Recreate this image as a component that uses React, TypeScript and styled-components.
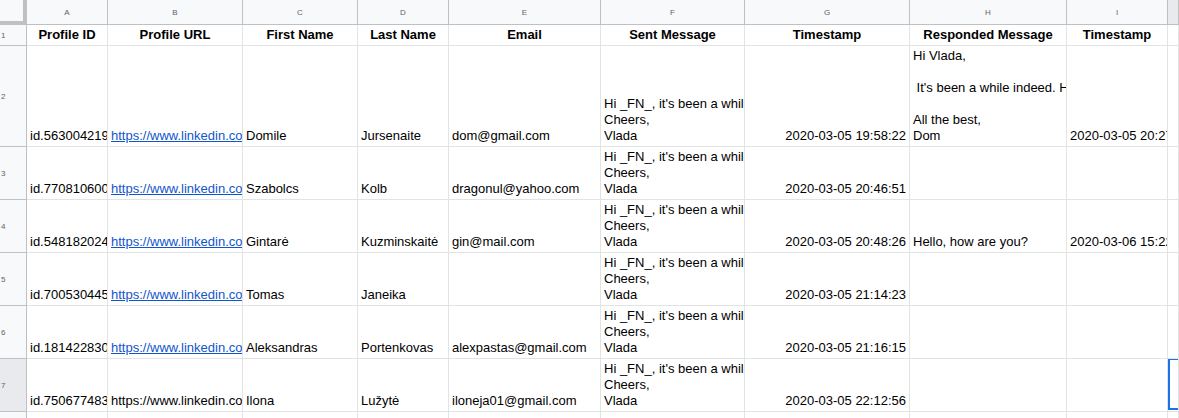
import React from 'react';
import styled, { createGlobalStyle } from 'styled-components';

const GlobalStyle = createGlobalStyle`
	html, body {
		margin: 0;
		padding: 0;
		background: #fff;
		overflow: hidden;
	}
`;

const grid = {
	line: '#e2e3e3',
	head: '#c0c0c0',
	headBg: '#f8f9fa',
	headSel: '#e8eaed',
	blue: '#1a73e8',
};

const Sheet = styled.div`
	display: grid;
	grid-template-columns: 27px 81px 135px 115px 91px 152px 144px 165px 157px 101px 1fr;
	grid-template-rows: 25px 21px 101px repeat(6, 53px);
	width: 1179px;
	height: 418px;
	overflow: hidden;
	font-family: 'Liberation Sans', Arial, sans-serif;
	color: #000;
`;

const Corner = styled.div`
	box-sizing: border-box;
	background: ${grid.headBg};
	border-right: 4px solid ${grid.head};
	border-bottom: 4px solid ${grid.head};
`;

const ColHead = styled.div<{ $selected?: boolean }>`
	box-sizing: border-box;
	display: flex;
	align-items: center;
	justify-content: center;
	background: ${(p) => (p.$selected ? grid.headSel : grid.headBg)};
	border-right: 1px solid ${grid.head};
	border-bottom: 1px solid ${grid.head};
	font-size: 8px;
	color: #5f6368;
`;

const RowHead = styled.div<{ $selected?: boolean }>`
	box-sizing: border-box;
	display: flex;
	align-items: center;
	padding-left: 1px;
	background: ${(p) => (p.$selected ? grid.headSel : grid.headBg)};
	border-right: 1px solid ${grid.head};
	border-bottom: 1px solid ${grid.head};
	font-size: 8px;
	color: #5f6368;
`;

const Cell = styled.div<{ $align?: 'left' | 'center' | 'right'; $bold?: boolean }>`
	position: relative;
	box-sizing: border-box;
	min-width: 0;
	display: flex;
	flex-direction: column;
	justify-content: flex-end;
	padding: 0 3px 2px;
	border-right: 1px solid ${grid.line};
	border-bottom: 1px solid ${grid.line};
	overflow: hidden;
	white-space: pre;
	font-size: 13px;
	line-height: 16px;
	font-weight: ${(p) => (p.$bold ? 700 : 400)};
	text-align: ${(p) => p.$align || 'left'};
`;

const Link = styled.span`
	color: #1155cc;
	text-decoration: underline;
`;

const Selection = styled.div`
	position: absolute;
	top: -1px;
	left: 0;
	right: -4px;
	bottom: 1px;
	border: 2px solid ${grid.blue};
`;

const letters = ['A', 'B', 'C', 'D', 'E', 'F', 'G', 'H', 'I', ''];
const titles = ['Profile ID', 'Profile URL', 'First Name', 'Last Name', 'Email', 'Sent Message', 'Timestamp', 'Responded Message', 'Timestamp', ''];

const sent = "Hi _FN_, it's been a while! How are things going on your end?\nCheers,\nVlada";

type Row = {
	id: string;
	linked: boolean;
	first: string;
	last: string;
	email: string;
	ts: string;
	reply: string;
	replyTs: string;
};

const rows: Row[] = [
	{
		id: 'id.5630042198',
		linked: true,
		first: 'Domile',
		last: 'Jursenaite',
		email: 'dom@gmail.com',
		ts: '2020-03-05 19:58:22',
		reply: "Hi Vlada,\n\n It's been a while indeed. How have you been?\n\nAll the best,\nDom",
		replyTs: '2020-03-05 20:27:41',
	},
	{ id: 'id.7708106004', linked: true, first: 'Szabolcs', last: 'Kolb', email: 'dragonul@yahoo.com', ts: '2020-03-05 20:46:51', reply: '', replyTs: '' },
	{ id: 'id.5481820243', linked: true, first: 'Gintarė', last: 'Kuzminskaitė', email: 'gin@mail.com', ts: '2020-03-05 20:48:26', reply: 'Hello, how are you?', replyTs: '2020-03-06 15:22:08' },
	{ id: 'id.7005304451', linked: true, first: 'Tomas', last: 'Janeika', email: '', ts: '2020-03-05 21:14:23', reply: '', replyTs: '' },
	{ id: 'id.1814228307', linked: true, first: 'Aleksandras', last: 'Portenkovas', email: 'alexpastas@gmail.com', ts: '2020-03-05 21:16:15', reply: '', replyTs: '' },
	{ id: 'id.7506774839', linked: false, first: 'Ilona', last: 'Lužytė', email: 'iloneja01@gmail.com', ts: '2020-03-05 22:12:56', reply: '', replyTs: '' },
];

const url = 'https://www.linkedin.com/in/profile';

function App() {
	const selectedRow = 5;

	return (
		<>
			<GlobalStyle />
			<Sheet>
				<Corner />
				{letters.map((l, i) => (
					<ColHead key={`c${i}`} $selected={i === 9}>{l}</ColHead>
				))}

				<RowHead>1</RowHead>
				{titles.map((t, i) => (
					<Cell key={`t${i}`} $align="center" $bold>{t}</Cell>
				))}

				{rows.map((r, i) => (
					<React.Fragment key={r.id}>
						<RowHead $selected={i === selectedRow}>{i + 2}</RowHead>
						<Cell>{r.id}</Cell>
						<Cell>{r.linked ? <Link>{url}</Link> : url}</Cell>
						<Cell>{r.first}</Cell>
						<Cell>{r.last}</Cell>
						<Cell>{r.email}</Cell>
						<Cell>{sent}</Cell>
						<Cell $align="right">{r.ts}</Cell>
						<Cell>{r.reply}</Cell>
						<Cell>{r.replyTs}</Cell>
						<Cell>{i === selectedRow && <Selection />}</Cell>
					</React.Fragment>
				))}

				<RowHead>8</RowHead>
				{letters.map((_, i) => (
					<Cell key={`e${i}`} />
				))}
			</Sheet>
		</>
	);
}

export default App;
